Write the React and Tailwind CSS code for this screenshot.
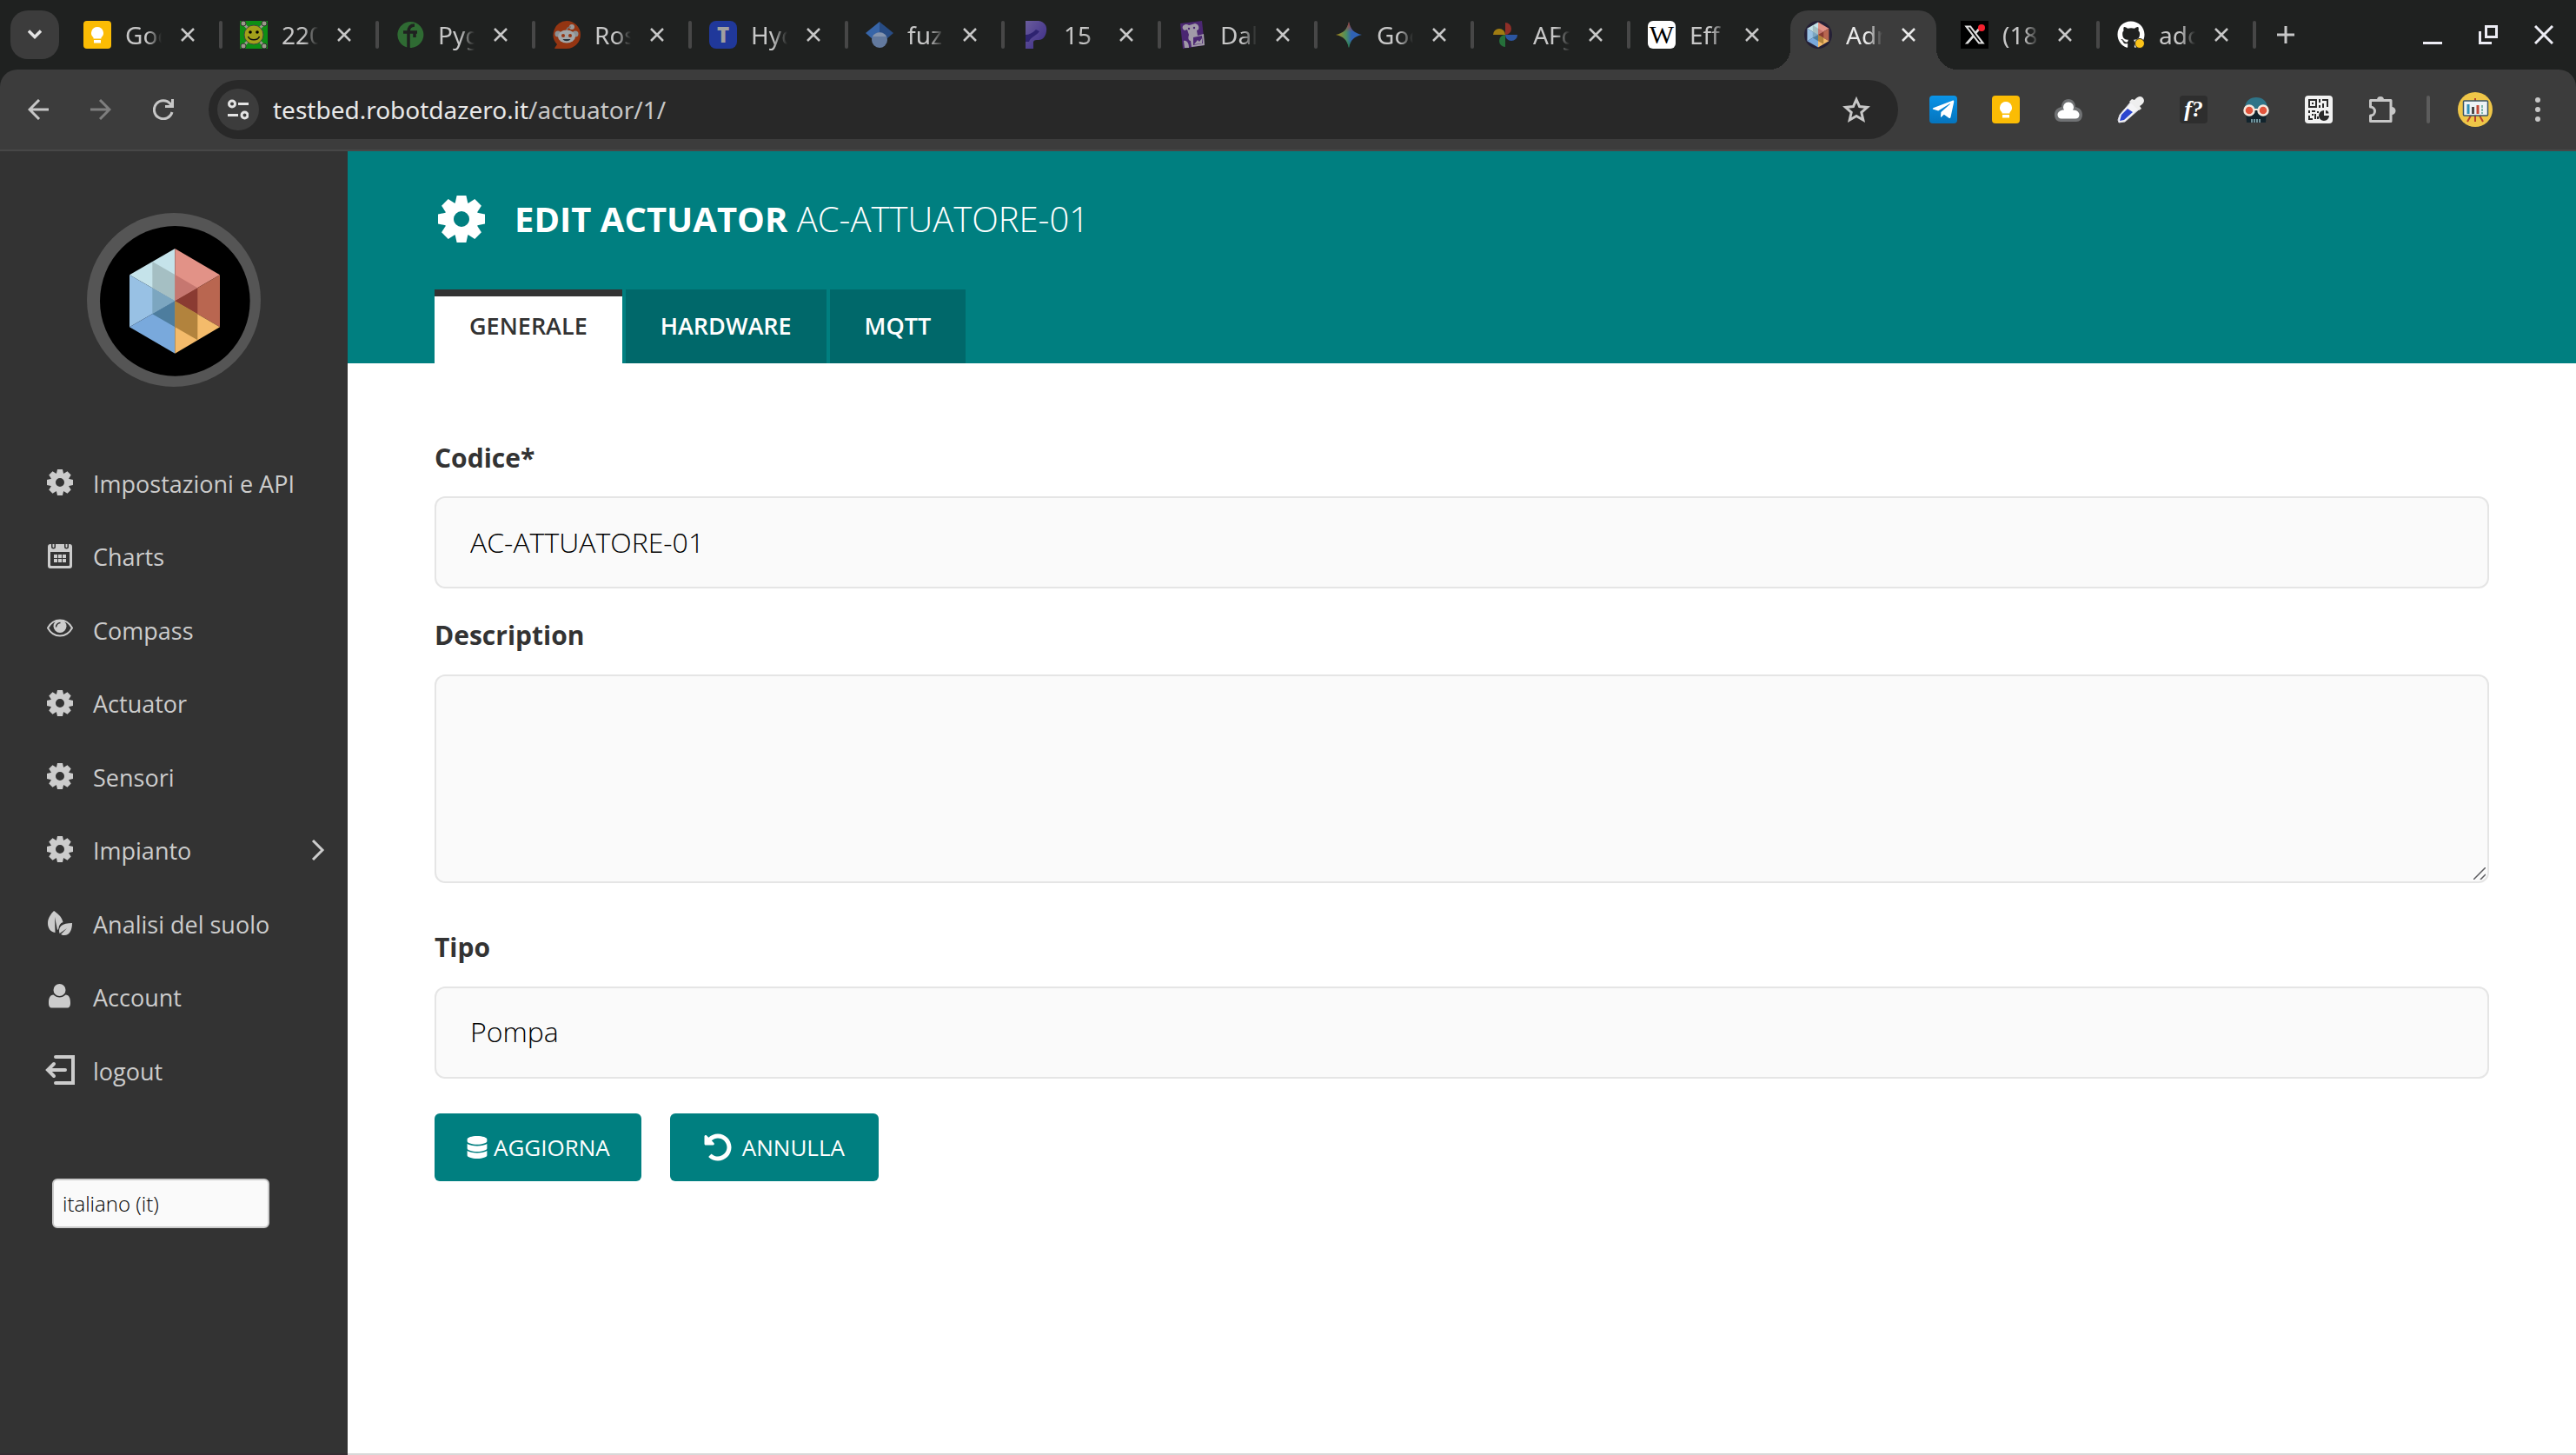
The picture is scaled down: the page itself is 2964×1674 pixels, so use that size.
import { FaDatabase, FaUndoAlt, FaGithub, FaTelegramPlane } from 'react-icons/fa';
import { FaXTwitter } from 'react-icons/fa6';

/* ---------- logo ---------- */

const HexFaces = () => (
  <g>
    <path fill="#c5e3ea" d="M604 330 447 421 604 511Z" />
    <path fill="#98c1e4" d="M447 421 604 511 447 601Z" />
    <path fill="#79a9dc" d="M447 601 604 511 604 692Z" />
    <path fill="#e29287" d="M604 330 759 421 604 511Z" />
    <path fill="#b96650" d="M759 421 759 601 604 511Z" />
    <path fill="#f4bb6b" d="M759 601 604 692 604 511Z" />
    <path fill="#a5bfc3" d="M526 375 604 420 604 511 526 466Z" />
    <path fill="#7ca6c0" d="M526 466 604 511 526 556Z" />
    <path fill="#4d7d9e" d="M526 556 604 511 604 601Z" />
    <path fill="#c67770" d="M604 420 682 466 604 511Z" />
    <path fill="#8a3b32" d="M682 466 682 556 604 511Z" />
    <path fill="#b2833d" d="M604 511 682 556 682 646 604 601Z" />
  </g>
);

const Logo = () => (
  <svg className="size-[200px]" viewBox="300 207 600 600">
    <circle cx="600" cy="507" r="300" fill="#555" />
    <circle cx="604" cy="511" r="259" />
    <HexFaces />
  </svg>
);

/* ---------- app icons ---------- */

const Gear = ({ className }) => (
  <svg className={className} viewBox="-15 -15 30 30" fill="currentColor">
    <circle r="8" fill="none" stroke="currentColor" strokeWidth="6" />
    {[0, 45, 90, 135, 180, 225, 270, 315].map(a => (
      <path key={a} transform={`rotate(${a})`} d="M-4.2-9.5-3-15H3L4.2-9.5Z" />
    ))}
  </svg>
);

const Calendar = () => (
  <svg className="size-[30px]" viewBox="0 0 30 30" fill="currentColor">
    <path fillRule="evenodd" d="M4 1H5v3a2.5 2.5 0 0 0 5 0V1H20v3a2.5 2.5 0 0 0 5 0V1H26a3 3 0 0 1 3 3V26a3 3 0 0 1-3 3H4a3 3 0 0 1-3-3V4a3 3 0 0 1 3-3ZM4 10V25a1 1 0 0 0 1 1H25a1 1 0 0 0 1-1V10Z" />
    <path d="M6.500 1h2v3a1 1 0 0 1-2 0ZM21.500 1h2v3a1 1 0 0 1-2 0Z" />
    <path d="M8 13h4v4H8ZM13 13h4v4h-4ZM18 13h4v4h-4ZM8 18h4v4H8ZM13 18h4v4h-4ZM18 18h4v4h-4Z" />
  </svg>
);

const Eye = () => (
  <svg className="size-[30px]" viewBox="0 0 30 30" fill="none" stroke="currentColor" strokeWidth="2">
    <path d="M1 13.500C4 8 9 4.500 15 4.500S26 8 29 13.500C26 19 21 22.500 15 22.500S4 19 1 13.500Z" />
    <circle cx="15" cy="11.500" r="7.500" fill="currentColor" stroke="none" />
    <path d="M10.500 12.500a5 5 0 0 1 5-5" stroke="#333" strokeWidth="1.500" />
  </svg>
);

const Leaves = () => (
  <svg className="size-[30px]" viewBox="0 0 30 30" fill="currentColor">
    <path d="M8 1C11 3 17 7 18.500 14c-3 1-5 4-5 7-.5 1-1 2-1.500 2L9 8l.5 18C4 25 1 21 1 15 1 9 5 4 8 1Z" />
    <path d="M29 15c0 8-3 14-9 14-2 0-3-.5-4-1l7-7-8.500 6c-2-8 3-12 14.500-12Z" />
  </svg>
);

const User = () => (
  <svg className="size-[30px]" viewBox="0 0 30 30" fill="currentColor">
    <ellipse cx="14.500" cy="8" rx="7" ry="7" />
    <path d="M7.500 13.500c4 4 10 4 14 0 4 0 5.500 4 5.500 9 0 4-1 6-4 6H6c-3 0-4-2-4-6 0-5 1.500-9 5.500-9Z" />
  </svg>
);

const Logout = () => (
  <svg className="size-[34px]" viewBox="0 0 34 34" fill="none" stroke="currentColor" strokeWidth="4" strokeLinecap="round">
    <path d="M12 2H32V32H12M4 17H23M10 10 3 17 10 24" />
  </svg>
);

/* ---------- favicons and extension icons ---------- */

const Keep = () => (
  <svg className="size-8" viewBox="0 0 32 32">
    <rect width="32" height="32" rx="4" fill="#fbbc04" />
    <path fill="#fff" d="M16 7a7 7 0 0 1 4.500 12.300V20.500h-9V19.300A7 7 0 0 1 16 7ZM12 22h8v3.500h-8Z" />
  </svg>
);

const Smiley = () => (
  <svg className="size-8" viewBox="0 0 32 32">
    <rect width="32" height="32" fill="#0e8f14" />
    <path d="M4 3 28 29M28 3 4 29" stroke="#9a9a8a" strokeWidth="3" />
    {[[4, 3], [28, 3], [4, 29], [28, 29]].map(([x, y]) => (
      <circle key={`${x}-${y}`} cx={x} cy={y} r="3" fill="#9a9a8a" stroke="#333" />
    ))}
    <circle cx="16" cy="16" r="11" fill="#a3a11b" stroke="#444" />
    <circle cx="12" cy="13" r="1.800" />
    <circle cx="20" cy="13" r="1.800" />
    <path d="M9.500 18c2 5 11 5 13 0" fill="none" stroke="#111" strokeWidth="1.500" />
  </svg>
);

const GreenT = () => (
  <svg className="size-8" viewBox="0 0 32 32">
    <path fill="#2f6b33" d="M16 1a15 15 0 1 1-5 29A15 15 0 0 1 16 1Z" />
    <path d="M14 32V13c0-6 3-8 7-8M8 13h16M21 13v6" fill="none" stroke="#1f2120" strokeWidth="3.500" />
  </svg>
);

const Reddit = () => (
  <svg className="size-8" viewBox="0 0 32 32">
    <path fill="#943512" d="M16 0a16 16 0 1 1 0 32H3c-1 0-1-1 0-2l2-3A16 16 0 0 1 16 0Z" />
    <circle cx="6" cy="15" r="3.500" fill="#8d9295" />
    <circle cx="26" cy="15" r="3.500" fill="#8d9295" />
    <circle cx="22" cy="7" r="3" fill="#999" />
    <path d="M16 12c0-4 2-5 5-5" fill="none" stroke="#777" strokeWidth="1.500" />
    <ellipse cx="16" cy="18" rx="10" ry="7.500" fill="#a2a6a8" />
    <circle cx="12" cy="17" r="2" fill="#943512" />
    <circle cx="20" cy="17" r="2" fill="#943512" />
    <path d="M11.500 21c2 3 7 3 9 0Z" fill="#26323a" />
  </svg>
);

const Scholar = () => (
  <svg className="size-8" viewBox="0 0 32 32">
    <path fill="#3765a8" d="M16 1 0 14l8 7 8-8Z" />
    <path fill="#284c84" d="M16 1 32 14l-8 7-8-8Z" />
    <circle cx="16" cy="22" r="9" fill="#62799e" />
    <path fill="#8494ae" d="M8 18c3-6 13-6 16 0Z" />
  </svg>
);

const PurpleP = () => (
  <svg className="size-8" viewBox="0 0 32 32">
    <defs>
      <linearGradient id="pp" x1="0" y1="0" x2="1" y2="1">
        <stop offset="0" stopColor="#6a5c9c" />
        <stop offset="1" stopColor="#3a2a86" />
      </linearGradient>
    </defs>
    <path fill="url(#pp)" d="M4 0H19C26 1 29 6 28 12c-1 7-5 10-9 10-3 0-5 0-6 2v8H4Z" />
    <path fill="#2e2370" d="M4 16c4 0 8-2 12-6l4 2c-4 6-10 6-12 12H4Z" />
  </svg>
);

const Datadog = () => (
  <svg className="size-8" viewBox="0 0 32 32">
    <path fill="#4b2772" d="M2 3 27 0l3 28-25 4Z" />
    <path fill="#a19aa8" d="M5 6c3-3 5-2 7-1 3-1 5-1 7-2 4 1 5 4 4 7l-2 1 1 6 7-2 1 13-15 2-1-7c-3 0-3-4-2-7l-2-6-3 1c-2-1-3-3-2-5Z" />
    <path fill="#4b2772" d="m17 19 10-2 1 9-11 2Z" />
    <path fill="#a19aa8" d="m18 27 4-5 2 2 3-4v6ZM6 23c4-1 6 3 6 8H7Z" />
    <circle cx="12" cy="9" r="1.200" fill="#4b2772" />
    <circle cx="18" cy="8" r="1.200" fill="#4b2772" />
  </svg>
);

const Gemini = () => (
  <svg className="size-8" viewBox="0 0 32 32">
    <defs>
      <linearGradient id="gm1" x1="0" y1="0" x2="1" y2="0">
        <stop offset="0" stopColor="#b18a12" />
        <stop offset=".4" stopColor="#4b8f62" />
        <stop offset=".6" stopColor="#2f62b4" />
        <stop offset="1" stopColor="#2f62b4" />
      </linearGradient>
      <linearGradient id="gm2" x1="0" y1="0" x2="0" y2="1">
        <stop offset="0" stopColor="#b5362c" />
        <stop offset=".4" stopColor="#b5362c" stopOpacity="0" />
        <stop offset=".7" stopColor="#22833f" stopOpacity="0" />
        <stop offset="1" stopColor="#22833f" />
      </linearGradient>
    </defs>
    <path fill="url(#gm1)" d="M16 1c2 9 6 13 15 15-9 2-13 6-15 15-2-9-6-13-15-15C10 14 14 10 16 1Z" />
    <path fill="url(#gm2)" d="M16 1c2 9 6 13 15 15-9 2-13 6-15 15-2-9-6-13-15-15C10 14 14 10 16 1Z" />
  </svg>
);

const Photos = () => (
  <svg className="size-8" viewBox="0 0 32 32">
    <path fill="#8f2f28" d="M16 2a7 7 0 0 1 0 14Z" />
    <path fill="#2b55a0" d="M30 16a7 7 0 0 1-14 0Z" />
    <path fill="#25703a" d="M16 30a7 7 0 0 1 0-14Z" />
    <path fill="#a07c12" d="M2 16a7 7 0 0 1 14 0Z" />
  </svg>
);

const LetterT = () => (
  <span className="grid size-8 place-items-center rounded-lg bg-[#20389a] text-[24px] leading-8 font-black text-[#a0a0a0]">T</span>
);

const LetterW = () => (
  <span className="grid size-8 place-items-center overflow-hidden rounded-md bg-white font-['Liberation_Serif',serif] text-[30px] leading-8 text-black">W</span>
);

const HexFavicon = () => (
  <svg className="size-8" viewBox="404 311 400 400">
    <circle cx="604" cy="511" r="200" fill="#252036" />
    <HexFaces />
  </svg>
);

const XLogo = () => (
  <span className="relative grid size-8 place-items-center bg-black text-[26px] text-[#ddd]">
    <FaXTwitter />
    <span className="absolute top-1 right-1 size-2 rounded-full bg-[#f4212e]"></span>
  </span>
);

const Github = () => (
  <span className="relative block size-8 text-[32px] text-white">
    <FaGithub />
    <span className="absolute right-0 bottom-0 size-3 rounded-full border border-[#1f2120] bg-[#fcc419]"></span>
  </span>
);

const Telegram = () => (
  <span className="grid size-8 place-items-center rounded bg-linear-to-b from-[#0a94e8] to-[#0574bd] text-[28px] text-white">
    <FaTelegramPlane />
  </span>
);

const Cloud = () => (
  <svg className="size-8" viewBox="0 0 32 32">
    <path fill="#707274" d="M16 4c5 0 8 4 8 9 5 1 8 4 8 9 0 5-3 8-7 8H7c-4 0-7-3-7-8 0-5 3-8 8-9 0-5 3-9 8-9Z" />
    <path fill="#fff" d="M16 7.500c4 0 6 3 6 6.500 0 1-1 2-1 2.500 5 0 7.500 3 7.500 5.500 0 3-2 4.500-4.500 4.500H8c-3 0-4.500-2-4.500-4.500 0-3 3-5.500 7.500-5.500 0-.5-1-1.500-1-2.500 0-3.500 2-6.500 6-6.500Z" />
  </svg>
);

const Dropper = () => (
  <svg className="size-8" viewBox="0 0 32 32">
    <path fill="#f4f4f6" stroke="#d4d4de" d="m16 7 9 9L9 30l-7 1-1-3 2-6Z" />
    <path fill="#2b45cf" d="m12 15 6 4L8 28l-5 1 2-7Z" />
    <path fill="#eee" d="M20 5c4-5 8-5 10-2 2 3 1 6-4 9l2 3-3 2L14 7l3-3Z" />
  </svg>
);

const FontFinder = () => (
  <span className="grid size-8 place-items-center rounded bg-[#2e2e2e] font-['Liberation_Serif',serif] text-[26px] leading-8 font-bold text-white italic">f?</span>
);

const Spy = () => (
  <svg className="size-8" viewBox="0 0 32 32">
    <path fill="#12242d" d="M4 14h24l-1 17H5Z" />
    <path fill="#2f7488" d="M3 15C3 6 9 2 16 2s13 4 13 13Z" />
    <circle cx="8" cy="17" r="5.500" fill="#e2543c" stroke="#f4e7dc" strokeWidth="2.500" />
    <circle cx="24" cy="17" r="5.500" fill="#e2543c" stroke="#f4e7dc" strokeWidth="2.500" />
    <path d="M13 16h6" stroke="#f4e7dc" strokeWidth="2" />
    <path d="M11 27v4M14 27v4M17 27v4M20 27v4" stroke="#8fb6c0" strokeWidth="1.500" />
  </svg>
);

const QrCode = () => (
  <svg className="size-8" viewBox="0 0 32 32">
    <rect width="32" height="32" rx="4" fill="#f2f2f2" />
    <g fill="none" stroke="#2a2a2a" strokeWidth="2">
      <rect x="5" y="5" width="8" height="8" />
      <path d="M9 8v2M17 4v4M17 11v3M20 5h6v8M21 9v5M5 17v3M8 18h4M5 23v4h4M12 21v6M8 22h2M15 18v2M15 24v3" />
    </g>
    <path fill="#2a2a2a" d="M22 17v6h6a6 6 0 1 1-6-6Z" />
    <path fill="#2a2a2a" d="M24 17a4 4 0 0 1 3.500 3.500H24Z" />
  </svg>
);

const Puzzle = () => (
  <svg className="size-[34px]" viewBox="0 0 34 34" fill="none" stroke="#c7c7c7" strokeWidth="3">
    <path d="M3.500 6.500H27V30.500H3.500V24a5 5 0 0 0 0-10Z" strokeLinejoin="round" />
    <path fill="#c7c7c7" stroke="none" d="M11 6a4 4 0 0 1 8 0ZM28 14a4.500 4.500 0 0 1 0 9Z" />
  </svg>
);

const Avatar = () => (
  <svg className="size-10" viewBox="0 0 40 40">
    <circle cx="20" cy="20" r="20" fill="#efc648" />
    <path d="m15 27-4 7M20 27v7M25 27l4 7M20 7v4" stroke="#b8402a" strokeWidth="2" />
    <rect x="6.500" y="10" width="28" height="17" rx="1" fill="#eef3f6" stroke="#3b5566" strokeWidth="1.500" />
    <path d="M12 14v11" stroke="#2f8fb5" strokeWidth="3" />
    <path d="M17.500 17v8" stroke="#4a4a4a" strokeWidth="3" />
    <path d="M23 15v10" stroke="#c44a38" strokeWidth="3" />
    <path d="M28 15v10" stroke="#7fb8ab" strokeWidth="2" strokeDasharray="3 1" />
  </svg>
);

/* ---------- browser chrome ---------- */

const tabs = [
  { title: 'Goo', Icon: Keep },
  { title: '220', Icon: Smiley },
  { title: 'Pyg', Icon: GreenT },
  { title: 'Ros', Icon: Reddit },
  { title: 'Hyd', Icon: LetterT },
  { title: 'fuz', Icon: Scholar },
  { title: '15', Icon: PurpleP },
  { title: 'Dal', Icon: Datadog },
  { title: 'Goo', Icon: Gemini },
  { title: 'AFg', Icon: Photos },
  { title: 'Eff', Icon: LetterW, last: true },
  { title: 'Adm', Icon: HexFavicon, active: true, last: true },
  { title: '(18', Icon: XLogo },
  { title: 'adc', Icon: Github },
];

const extensions = [
  { name: 'Telegram', Icon: Telegram },
  { name: 'Keep', Icon: Keep },
  { name: 'Cloud', Icon: Cloud },
  { name: 'Color picker', Icon: Dropper },
  { name: 'Font finder', Icon: FontFinder },
  { name: 'Spy', Icon: Spy },
  { name: 'QR code', Icon: QrCode },
  { name: 'Extensions', Icon: Puzzle },
];

const BrowserTab = ({ title, Icon, active, last }) => (
  <li className="flex h-full w-[180px] shrink-0 items-center">
    <div className={`relative flex h-full w-[172px] items-center pl-5 ${active ? 'text-[#e8e8e8]' : 'text-[#c7c7c7]'}`}>
      {active && (
        <span className="absolute top-3 right-0 bottom-0 left-1 rounded-t-[20px] bg-[#3c3c3c] before:absolute before:bottom-0 before:-left-6 before:size-6 before:bg-[radial-gradient(circle_at_0_0,transparent_24px,#3c3c3c_24px)] after:absolute after:-right-6 after:bottom-0 after:size-6 after:bg-[radial-gradient(circle_at_100%_0,transparent_24px,#3c3c3c_24px)]"></span>
      )}
      <span className="relative flex items-center">
        <Icon />
        <span className="ml-4 w-[42px] overflow-hidden text-[28px] leading-10 whitespace-nowrap [mask-image:linear-gradient(to_right,black_60%,transparent)]">{title}</span>
        <button aria-label={`Close ${title}`} className="ml-[22px]">
          <svg className="size-4" viewBox="0 0 16 16" stroke="currentColor" strokeWidth="2.500"><path d="M1 1 15 15M15 1 1 15" /></svg>
        </button>
      </span>
    </div>
    {!last && <span className="ml-1 h-8 w-1 rounded-full bg-[#474747]"></span>}
  </li>
);

const TabStrip = () => (
  <div className="flex h-20 items-center pl-3">
    <button aria-label="Search tabs" className="grid size-14 place-items-center rounded-[20px] bg-[#3c3c3c]">
      <svg className="h-3 w-4" viewBox="0 0 16 12" fill="none" stroke="#e3e3e3" strokeWidth="3.500"><path d="m1 1.500 7 7 7-7" /></svg>
    </button>
    <ul className="ml-2 flex h-full">
      {tabs.map((t, i) => <BrowserTab key={i} {...t} />)}
    </ul>
    <button aria-label="New tab" className="ml-6">
      <svg className="size-5" viewBox="0 0 20 20" stroke="#c7c7c7" strokeWidth="3"><path d="M10 0V20M0 10H20" /></svg>
    </button>
    <div className="ml-auto flex items-center gap-[42px] pr-[26px]">
      <button aria-label="Minimize">
        <svg className="size-[22px]" viewBox="0 0 22 22"><path fill="#ececf4" d="M0 19h22v3H0Z" /></svg>
      </button>
      <button aria-label="Restore">
        <svg className="size-[22px]" viewBox="0 0 22 22" fill="none" stroke="#ececf4" strokeWidth="3"><path d="M8.500 1.500h12v12h-12ZM1.500 7V20.500H15" /></svg>
      </button>
      <button aria-label="Close window">
        <svg className="size-[22px]" viewBox="0 0 22 22" stroke="#ececf4" strokeWidth="3"><path d="M1 1 21 21M21 1 1 21" /></svg>
      </button>
    </div>
  </div>
);

const Toolbar = () => (
  <div className="flex items-center rounded-t-[20px] border-b-2 border-[#474747] bg-[#3c3c3c] py-3 pr-9 pl-8">
    <div className="flex items-center gap-12 text-[#c7c7c7]">
      <button aria-label="Back">
        <svg className="size-6" viewBox="0 0 24 24" fill="none" stroke="currentColor" strokeWidth="3"><path d="M24 12H2M13 1 2 12 13 23" /></svg>
      </button>
      <button aria-label="Forward" className="text-[#7e7e7e]">
        <svg className="size-6" viewBox="0 0 24 24" fill="none" stroke="currentColor" strokeWidth="3"><path d="M0 12H22M11 1 22 12 11 23" /></svg>
      </button>
      <button aria-label="Reload">
        <svg className="size-6" viewBox="0 0 24 24" fill="none" stroke="currentColor" strokeWidth="3"><path d="M22 15A10.500 10.500 0 1 1 20 5.500L22 8M22.500 0V8.500H14" /></svg>
      </button>
    </div>
    <div className="ml-10 flex h-[68px] flex-1 items-center rounded-full bg-[#282828] pr-8 pl-[10px]">
      <button aria-label="Site information" className="grid size-12 place-items-center rounded-full bg-[#3c3c3c]">
        <svg className="size-6" viewBox="0 0 24 24" fill="none" stroke="#e3e3e3" strokeWidth="3"><circle cx="5" cy="5.500" r="3.500" /><path d="M12 5.500H24M0 18.500H12" /><circle cx="19.500" cy="18.500" r="3.500" /></svg>
      </button>
      <span className="ml-4 text-[28px] leading-10 text-[#c7c7c7]"><span className="text-[#e8e8e8]">testbed.robotdazero.it</span>/actuator/1/</span>
      <button aria-label="Bookmark" className="ml-auto">
        <svg className="size-8" viewBox="0 0 32 32" fill="none" stroke="#c7c7c7" strokeWidth="3"><path d="m16 4.500 3.600 8 8.900.9-6.700 5.900 2 8.700L16 23.500 8.200 28l2-8.700-6.700-5.900 8.900-.9Z" /></svg>
      </button>
    </div>
    <div className="ml-9 flex items-center gap-10">
      {extensions.map(({ name, Icon }) => <button key={name} aria-label={name}><Icon /></button>)}
    </div>
    <span className="ml-[34px] h-8 w-1 rounded-full bg-[#5c5c5c]"></span>
    <button aria-label="Profile" className="ml-8"><Avatar /></button>
    <button aria-label="Menu" className="ml-[44px]">
      <svg className="h-8 w-4" viewBox="0 0 16 32" fill="#c7c7c7"><circle cx="8" cy="5" r="3" /><circle cx="8" cy="16" r="3" /><circle cx="8" cy="27" r="3" /></svg>
    </button>
  </div>
);

/* ---------- page ---------- */

const menu = [
  { label: 'Impostazioni e API', icon: <Gear className="size-[30px]" /> },
  { label: 'Charts', icon: <Calendar /> },
  { label: 'Compass', icon: <Eye /> },
  { label: 'Actuator', icon: <Gear className="size-[30px]" /> },
  { label: 'Sensori', icon: <Gear className="size-[30px]" /> },
  { label: 'Impianto', icon: <Gear className="size-[30px]" />, sub: true },
  { label: 'Analisi del suolo', icon: <Leaves /> },
  { label: 'Account', icon: <User /> },
  { label: 'logout', icon: <Logout /> },
];

const Sidebar = () => (
  <aside className="w-[400px] shrink-0 border-b-2 border-[#342c32] bg-[#333] pt-[71px] text-[#ccc]">
    <a href="#" aria-label="Home" className="flex justify-center"><Logo /></a>
    <nav className="mt-[69px]">
      <ul className="grid h-[760px] auto-rows-fr">
        {menu.map(({ label, icon, sub }) => (
          <li key={label}>
            <a href="#" className="flex h-full items-center gap-[21px] pr-[26px] pl-[52px] text-[27px]">
              <span className="flex w-[34px] justify-center pb-[2px]">{icon}</span>
              <span className="pt-[2px]">{label}</span>
              {sub && (
                <svg className="ml-auto h-6 w-4" viewBox="0 0 16 24" fill="none" stroke="currentColor" strokeWidth="3"><path d="M2 1 13 12 2 23" /></svg>
              )}
            </a>
          </li>
        ))}
      </ul>
    </nav>
    <select aria-label="Lingua" className="mt-[82px] ml-[60px] h-[57px] w-[250px] appearance-none rounded-md border-2 border-[#ccc] bg-[#fafafa] px-[10px] text-[24px] leading-8 font-light text-black">
      <option>italiano (it)</option>
    </select>
  </aside>
);

const PageHeader = () => (
  <header className="bg-[#007f80] px-[100px] pt-[50px]">
    <div className="flex items-center gap-[34px] pl-1 text-white">
      <Gear className="size-[54px]" />
      <h1 className="text-[40px] leading-[56px] font-light"><strong className="font-bold">EDIT ACTUATOR</strong> AC-ATTUATORE-01</h1>
    </div>
    <nav className="mt-[53px] flex h-[85px] gap-1 text-[27px] font-semibold">
      <a href="#" className="flex items-center bg-white px-10 text-[#333] shadow-[inset_0_8px_0_#333]">GENERALE</a>
      <a href="#" className="flex items-center bg-[#00686a] px-10 text-white">HARDWARE</a>
      <a href="#" className="flex items-center bg-[#00686a] px-10 text-white">MQTT</a>
    </nav>
  </header>
);

const ActuatorForm = () => (
  <form className="px-[100px] pt-[87px] text-[32px] font-light text-black" onSubmit={e => e.preventDefault()}>
    <label htmlFor="codice" className="block text-[30px] leading-[44px] font-bold text-[#333]">Codice*</label>
    <input id="codice" defaultValue="AC-ATTUATORE-01" className="mt-[22px] block h-[106px] w-full rounded-xl border-2 border-[#e5e5e5] bg-[#fafafa] px-[39px] pb-[2px]" />

    <label htmlFor="description" className="mt-8 block text-[30px] leading-[44px] font-bold text-[#333]">Description</label>
    <div className="relative mt-[23px]">
      <textarea id="description" className="block h-[240px] w-full resize-none rounded-xl border-2 border-[#e5e5e5] bg-[#fafafa] px-[39px] py-6"></textarea>
      <svg className="pointer-events-none absolute right-1 bottom-1 size-[14px]" viewBox="0 0 14 14" stroke="#5a5a5e" strokeWidth="1.500"><path d="M0 14 14 0M8 14 14 8" /></svg>
    </div>

    <label htmlFor="tipo" className="mt-[52px] block text-[30px] leading-[44px] font-bold text-[#333]">Tipo</label>
    <select id="tipo" className="mt-[23px] block h-[106px] w-full appearance-none rounded-xl border-2 border-[#e5e5e5] bg-[#fafafa] px-[39px] pb-[2px]">
      <option>Pompa</option>
    </select>

    <div className="mt-10 flex gap-[33px] text-[26px] font-normal text-white">
      <button type="submit" className="flex h-[78px] items-center gap-[6px] rounded-md bg-[#007f80] px-9">
        <FaDatabase className="size-[26px]" />AGGIORNA
      </button>
      <button type="button" className="flex h-[78px] items-center gap-3 rounded-md bg-[#007f80] px-[39px]">
        <FaUndoAlt className="size-8" />ANNULLA
      </button>
    </div>
  </form>
);

export default function App() {
  return (
    <div className="flex min-h-screen flex-col bg-[#1f2120]">
      <div className="font-['Noto_Sans',sans-serif]">
        <TabStrip />
        <Toolbar />
      </div>
      <div className="flex flex-1 font-['Open_Sans',sans-serif]">
        <Sidebar />
        <main className="flex-1 border-b-2 border-[#d8d8d8] bg-white">
          <PageHeader />
          <ActuatorForm />
        </main>
      </div>
    </div>
  );
}
